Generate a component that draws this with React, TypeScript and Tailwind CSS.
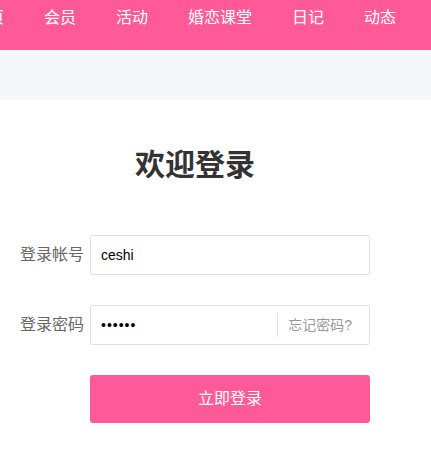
const navItems = ['首页', '会员', '活动', '婚恋课堂', '日记', '动态'];

export default function App() {
  return (
    <div
      className="min-h-[457px] w-[431px] overflow-hidden bg-white"
      style={{ fontFamily: '"Liberation Sans", "Noto Sans CJK SC", sans-serif' }}
    >
      {/* 顶部导航 */}
      <div className="h-[50px] bg-[#ff5a98] overflow-hidden">
        <ul className="flex ml-[-48px] whitespace-nowrap">
          {navItems.map((item) => (
            <li key={item} className="px-5 leading-[36px] text-[16px] text-white">
              {item}
            </li>
          ))}
        </ul>
      </div>
      <div className="h-[50px] bg-[#f6f7fb]" />

      {/* 登录表单 */}
      <div className="ml-[20px] w-[350px]">
        <h2 className="mt-[50px] text-center text-[30px] font-bold leading-[30px] text-[#333]">欢迎登录</h2>

        <div className="mt-[55px] flex items-center">
          <label className="w-[70px] text-[16px] text-[#666]">登录帐号</label>
          <div className="flex h-[40px] flex-1 items-center rounded-[2px] border border-[#e2e2e2] px-[10px] text-[14px] text-black">
            ceshi
          </div>
        </div>

        <div className="mt-[30px] flex items-center">
          <label className="w-[70px] text-[16px] text-[#666]">登录密码</label>
          <div className="flex h-[40px] flex-1 items-center rounded-[2px] border border-[#e2e2e2] pl-[10px] text-[14px]">
            <span className="flex-1 tracking-[1px] text-black">••••••</span>
            <span className="h-[24px] border-l border-[#e2e2e2] pl-[10px] pr-[17px] leading-[24px] text-[#999]">
              忘记密码?
            </span>
          </div>
        </div>

        <button className="ml-[70px] mt-[30px] h-[48px] w-[280px] rounded-[3px] bg-[#ff5a98] text-[16px] text-white">
          立即登录
        </button>
      </div>
    </div>
  );
}
